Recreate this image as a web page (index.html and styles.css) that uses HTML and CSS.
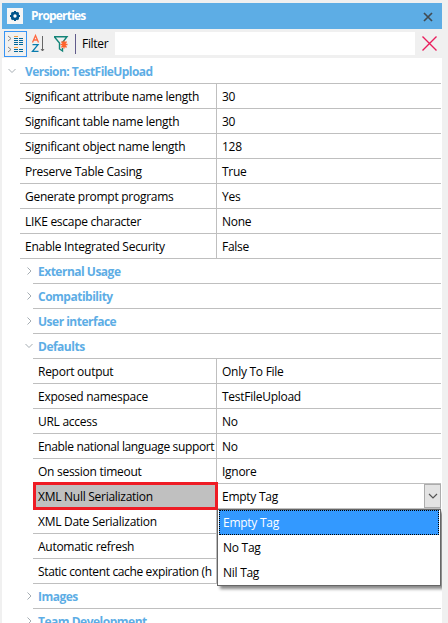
FILE: index.html
```html
<!DOCTYPE html>
<html lang="en">
<head>
<meta charset="utf-8">
<title>Properties</title>
<link rel="stylesheet" href="styles.css">
</head>
<body>
<main class="panel">
  <header class="titlebar">
    <span class="gear"><svg width="16" height="16" viewBox="0 0 16 16"><path d="M8 3v10M3 8h10M4.500 4.500l7 7M11.500 4.500l-7 7" stroke="#00558c" stroke-width="2"/><circle cx="8" cy="8" r="3" fill="#fff" stroke="#00558c" stroke-width="2.600"/></svg></span>
    <h1>Properties</h1>
    <svg class="close" width="10" height="10" viewBox="0 0 10 10"><path d="M1 1l8 8M9 1l-8 8" stroke="#414b52" stroke-width="1.700"/></svg>
  </header>
  <div class="toolbar">
    <span class="tool active"><svg width="21" height="24" viewBox="0 0 21 24"><path d="M3 4l3 2.500L3 9M3 15l3 2.500L3 20" fill="none" stroke="#888" /><path d="M9 4.500h4M9 15.500h4" stroke="#f29a38"/><path d="M14 6.500h4M9 6.500h4M9 8.500h4M14 8.500h4M9 10.500h4M14 10.500h4M9 12.500h4M14 12.500h4M14 17.500h4M9 17.500h4M9 19.500h4M14 19.500h4" stroke="#00679a"/></svg></span>
    <svg class="sort" width="16" height="20" viewBox="0 0 16 20"><path d="M1.500 8.500L4.500 1.500 7.500 8.500M2.500 6h4" fill="none" stroke="#ff6840" stroke-width="1.300"/><path d="M1.500 10.700h5.500L1.500 17.300H7.500" fill="none" stroke="#087cae" stroke-width="1.300"/><path d="M11.500 2v15M10 15l1.500 2 1.500-2" fill="none" stroke="#666"/></svg>
    <svg class="funnel" width="17" height="18" viewBox="0 0 17 18"><path d="M1 1.700h13L9.500 7.500M1.500 2l5 6v6l3 2v-3" fill="none" stroke="#138478" stroke-width="1.400"/><path d="M11 5.500v8M7.500 9.500h7M8.500 6.500l5 6M13.500 6.500l-5 6" stroke="#ff632d" stroke-width="1.400"/></svg>
    <span class="divider"></span>
    <label class="filter-label" for="filter">Filter</label>
    <input id="filter" class="filter">
    <svg class="clear" width="15" height="15" viewBox="0 0 15 15"><path d="M.5.500l14 14M14.500.500l-14 14" stroke="#e91e5d" stroke-width="1.400"/></svg>
  </div>
  <section class="grid">
    <h2 class="root"><svg class="arrow" width="10" height="10" viewBox="0 0 10 10"><path d="M1.500 3l3.500 3.500L8.500 3"/></svg><span>Version: TestFileUpload</span></h2>
    <div class="rows first">
      <div class="row"><span>Significant attribute name length</span><b>30</b></div>
      <div class="row"><span>Significant table name length</span><b>30</b></div>
      <div class="row"><span>Significant object name length</span><b>128</b></div>
      <div class="row"><span>Preserve Table Casing</span><b>True</b></div>
      <div class="row"><span>Generate prompt programs</span><b>Yes</b></div>
      <div class="row"><span>LIKE escape character</span><b>None</b></div>
      <div class="row"><span>Enable Integrated Security</span><b>False</b></div>
    </div>
    <h2><svg class="arrow" width="10" height="10" viewBox="0 0 10 10"><path d="M3.500 1.500L7 5 3.500 8.500"/></svg><span>External Usage</span></h2>
    <h2><svg class="arrow" width="10" height="10" viewBox="0 0 10 10"><path d="M3.500 1.500L7 5 3.500 8.500"/></svg><span>Compatibility</span></h2>
    <h2><svg class="arrow" width="10" height="10" viewBox="0 0 10 10"><path d="M3.500 1.500L7 5 3.500 8.500"/></svg><span>User interface</span></h2>
    <h2><svg class="arrow" width="10" height="10" viewBox="0 0 10 10"><path d="M1.500 3l3.500 3.500L8.500 3"/></svg><span>Defaults</span></h2>
    <div class="rows nested">
      <div class="row"><span>Report output</span><b>Only To File</b></div>
      <div class="row"><span>Exposed namespace</span><b>TestFileUpload</b></div>
      <div class="row"><span>URL access</span><b>No</b></div>
      <div class="row"><span class="tight">Enable national language support</span><b>No</b></div>
      <div class="row"><span>On session timeout</span><b>Ignore</b></div>
      <div class="row selected"><span>XML Null Serialization</span><b>Empty Tag</b>
        <span class="combo"><svg width="10" height="8" viewBox="0 0 10 8"><path d="M1 2l4 4 4-4" fill="none" stroke="#555" stroke-width="1.200"/></svg></span>
        <div class="menu"><div class="option current">Empty Tag</div><div class="option">No Tag</div><div class="option">Nil Tag</div></div>
      </div>
      <div class="row"><span>XML Date Serialization</span><b></b></div>
      <div class="row"><span>Automatic refresh</span><b></b></div>
      <div class="row"><span class="tight">Static content cache expiration (h</span><b></b></div>
    </div>
    <h2><svg class="arrow" width="10" height="10" viewBox="0 0 10 10"><path d="M3.500 1.500L7 5 3.500 8.500"/></svg><span>Images</span></h2>
    <h2><svg class="arrow" width="10" height="10" viewBox="0 0 10 10"><path d="M3.500 1.500L7 5 3.500 8.500"/></svg><span>Team Development</span></h2>
  </section>
</main>
</body>
</html>
```
FILE: styles.css
```css
*, *::before, *::after { box-sizing: border-box; }
body { margin: 0; height: 623px; overflow: hidden; background: #f0f0f0; color: #000; font: 12px/26px "Open Sans", "Noto Sans", sans-serif; letter-spacing: -0.27px; }
svg { display: block; flex: none; }
.panel { width: 440px; margin-left: 2px; padding-top: 3px; }
.titlebar { height: 26px; background: #5dade5; display: flex; align-items: center; padding: 0 9px 0 5px; }
.gear { width: 16px; height: 16px; background: #f5f5f5; }
h1 { margin: 0 auto 0 8px; color: #fff; font: 700 12px/26px "Open Sans", sans-serif; letter-spacing: -0.8px; }
.close { margin-top: 2px; }
.toolbar { height: 29px; display: flex; align-items: center; }
.tool { width: 23px; height: 26px; margin-left: 2px; border: 1px solid #3794f5; }
.sort { margin-left: 4px; }
.funnel { margin-left: 6px; }
.divider { width: 1px; height: 20px; margin-left: 5px; background: #605b8b; }
.filter-label { width: 39px; padding-left: 6px; line-height: 24px; letter-spacing: -0.3px; }
.filter { width: 300px; height: 23px; padding: 0; border: 0; background: #fff; }
.clear { margin-left: 7px; }
.grid { height: 565px; background: #fff; overflow: hidden; }
h2 { margin: 0 1px 0 31px; height: 25px; border-bottom: 1px solid #bfbfbf; display: flex; align-items: center; color: #5dade5; font: 700 12px/26px "Open Sans", sans-serif; letter-spacing: -0.5px; white-space: nowrap; }
h2 > span { height: 24px; }
h2.root { margin-left: 18px; height: 26px; letter-spacing: -0.57px; }
.arrow { margin: 0 4px 0 -9px; fill: none; stroke: #a5adb3; }
.root .arrow { margin: 0 8px 0 -13px; }
.rows { margin: 0 1px 0 18px; }
.nested { margin-left: 31px; }
.row { height: 25px; display: flex; position: relative; border-bottom: 1px solid #bfbfbf; white-space: nowrap; }
.row > span:first-child { width: 197px; flex: none; padding-left: 5px; border-right: 1px solid #bfbfbf; overflow: hidden; }
.nested .row > span:first-child { width: 184px; }
.row > .tight { letter-spacing: -0.36px; }
.row b { flex: 1; padding-left: 5px; font-weight: 400; }
.combo { width: 17px; height: 24px; border: 1px solid #acacac; background: #e3e3e3; display: grid; place-items: center; }
.selected::before { content: ""; position: absolute; z-index: 3; left: 0; top: -2px; width: 185px; height: 28px; border: 3px solid #ee1c25; pointer-events: none; }
.selected > span:first-child { background: #c0c0c0; }
.menu { position: absolute; z-index: 2; left: 184px; top: 25px; width: 224px; height: 77px; padding: 0 1px 1px; border: 1px solid #666; background: #fff; box-shadow: 3px 3px 3px #0007; }
.option { height: 25px; padding-left: 4px; line-height: 26px; }
.current { color: #fff; background: #3399ff; outline: 1px dotted #000; outline-offset: -1px; }
```
